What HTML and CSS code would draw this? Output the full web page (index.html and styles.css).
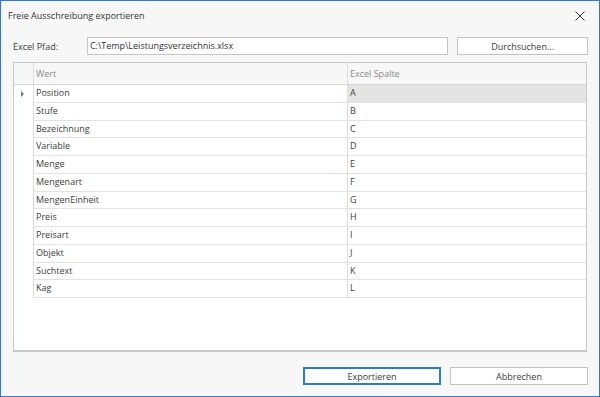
FILE: index.html
```html
<!DOCTYPE html>
<html lang="de">
  <head>
    <meta charset="UTF-8" />
    <title>Freie Ausschreibung exportieren</title>
    <link rel="stylesheet" href="styles.css">
  </head>
  <body>
    <div class="window">
      <div class="titlebar">
        <span class="title">Freie Ausschreibung exportieren</span>
        <span class="close">
          <svg width="10" height="10" viewBox="0 0 10 10">
            <path d="M0.5 0.5 L9.5 9.5 M9.5 0.5 L0.5 9.5" stroke="#3a3a3a" stroke-width="1" fill="none" />
          </svg>
        </span>
      </div>

      <div class="path-row">
        <label class="path-label" for="pfad">Excel Pfad:</label>
        <div class="path-input" id="pfad">C:\Temp\Leistungsverzeichnis.xlsx</div>
        <button class="btn btn-browse">Durchsuchen...</button>
      </div>

      <div class="grid">
        <div class="grid-head">
          <div class="cell ind"></div>
          <div class="cell">Wert</div>
          <div class="cell">Excel Spalte</div>
        </div>
        <div class="grid-body">
          <div class="grid-row current">
            <div class="cell ind"><span class="arrow"></span></div>
            <div class="cell">Position</div>
            <div class="cell focused">A</div>
          </div>
          <div class="grid-row">
            <div class="cell ind"></div>
            <div class="cell">Stufe</div>
            <div class="cell">B</div>
          </div>
          <div class="grid-row">
            <div class="cell ind"></div>
            <div class="cell">Bezeichnung</div>
            <div class="cell">C</div>
          </div>
          <div class="grid-row">
            <div class="cell ind"></div>
            <div class="cell">Variable</div>
            <div class="cell">D</div>
          </div>
          <div class="grid-row">
            <div class="cell ind"></div>
            <div class="cell">Menge</div>
            <div class="cell">E</div>
          </div>
          <div class="grid-row">
            <div class="cell ind"></div>
            <div class="cell">Mengenart</div>
            <div class="cell">F</div>
          </div>
          <div class="grid-row">
            <div class="cell ind"></div>
            <div class="cell">MengenEinheit</div>
            <div class="cell">G</div>
          </div>
          <div class="grid-row">
            <div class="cell ind"></div>
            <div class="cell">Preis</div>
            <div class="cell">H</div>
          </div>
          <div class="grid-row">
            <div class="cell ind"></div>
            <div class="cell">Preisart</div>
            <div class="cell">I</div>
          </div>
          <div class="grid-row">
            <div class="cell ind"></div>
            <div class="cell">Objekt</div>
            <div class="cell">J</div>
          </div>
          <div class="grid-row">
            <div class="cell ind"></div>
            <div class="cell">Suchtext</div>
            <div class="cell">K</div>
          </div>
          <div class="grid-row">
            <div class="cell ind"></div>
            <div class="cell">Kag</div>
            <div class="cell">L</div>
          </div>
        </div>
      </div>

      <div class="footer">
        <button class="btn btn-default">Exportieren</button>
        <button class="btn">Abbrechen</button>
      </div>
    </div>
  </body>
</html>
```

FILE: styles.css
```css
body {
  margin: 0;
  background-color: #f7f7f7;
  font-family: "Open Sans", "Noto Sans", sans-serif;
  font-size: 9px;
  color: #3c3c3c;
}

.window {
  width: 600px;
  height: 397px;
  box-sizing: border-box;
  border: 1px solid #2b7bd0;
  background-color: #f7f7f7;
  display: flex;
  flex-direction: column;
}

.titlebar {
  height: 28px;
  display: flex;
  align-items: center;
  justify-content: space-between;
  padding: 0 14px 0 7px;
}

.title {
  color: #333;
}

.close {
  display: flex;
  margin-top: 1px;
}

.path-row {
  display: flex;
  align-items: center;
  margin-top: 8px;
  padding: 0 11px 0 12px;
  height: 18px;
}

.path-label {
  width: 74px;
}

.path-input {
  width: 358px;
  height: 16px;
  line-height: 16px;
  border: 1px solid #c6c6c6;
  background-color: #fff;
  padding-left: 2px;
  color: #333;
}

.btn {
  font-family: inherit;
  font-size: 9px;
  color: #3c3c3c;
  background-color: #fff;
  border: 1px solid #c4c4c4;
  height: 18px;
  padding: 0;
  box-sizing: border-box;
}

.btn-browse {
  margin-left: 9px;
  width: 131px;
}

.grid {
  margin: 7px 12px 0 12px;
  height: 290px;
  box-sizing: border-box;
  border: 1px solid #c8c8c8;
  border-bottom-width: 2px;
  background-color: #fff;
}

.grid-head,
.grid-row {
  display: grid;
  grid-template-columns: 20px 314px 1fr;
}

.grid-head {
  height: 21px;
  background-color: #f7f7f7;
  border-bottom: 1px solid #d6d6d6;
  color: #8a8a8a;
}

.grid-head .cell {
  line-height: 21px;
}

.grid-row {
  height: 17.75px;
}

.cell {
  box-sizing: border-box;
  padding-left: 2px;
  border-right: 1px solid #dcdcdc;
  line-height: 16px;
  white-space: nowrap;
  overflow: hidden;
}

.cell:last-child {
  border-right: none;
}

.grid-row .cell {
  border-bottom: 1px solid #e2e2e2;
}

.grid-row .cell.ind {
  border-bottom: none;
}

.grid-head .cell.ind {
  border-right: 1px solid #dcdcdc;
}

.focused {
  background-color: #e4e4e4;
}

.ind {
  display: flex;
  align-items: center;
  justify-content: center;
  padding-left: 0;
}

.arrow {
  width: 0;
  height: 0;
  border-left: 3px solid #7a7a7a;
  border-top: 3px solid transparent;
  border-bottom: 3px solid transparent;
  margin-right: 2px;
}

.footer {
  display: flex;
  justify-content: flex-end;
  gap: 9px;
  margin-top: 15px;
  padding-right: 11px;
}

.footer .btn {
  width: 138px;
}

.btn-default {
  border: 2px solid #2b7bd0;
}
```
